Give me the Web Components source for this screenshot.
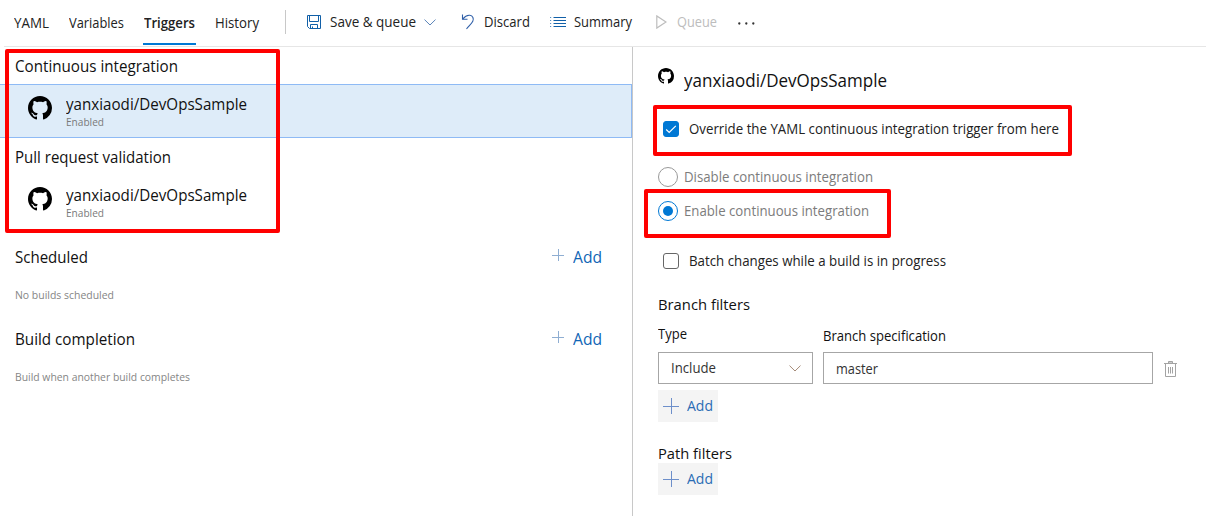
<!DOCTYPE html>
<html lang="en">
<head>
<meta charset="utf-8">
<title>Triggers</title>
<style>
html,body{margin:0;height:516px;overflow:hidden;background:#fff}
body{font-family:"Open Sans","Noto Sans",sans-serif;color:#111}
</style>
</head>
<body>
<triggers-page></triggers-page>
<script>
const define = (name, html, init) => customElements.define(name, class extends HTMLElement {
  constructor() {
    super();
    const t = document.createElement('template');
    t.innerHTML = html;
    this.attachShadow({mode: 'open'}).append(t.content.cloneNode(true));
  }
  connectedCallback() { if (init) init.call(this, this.shadowRoot); }
});

/* Single-line label condensed to the width it is given. */
define('ui-label', `<style>
:host{display:block;white-space:nowrap;flex:none;line-height:20px;font-size:13.8px}
span{display:inline-block;transform-origin:0 50%}
</style><span><slot></slot></span>`, function (root) {
  const w = +this.getAttribute('w'), s = root.querySelector('span');
  const size = this.getAttribute('size');
  if (size) this.style.fontSize = size + 'px';
  this.style.width = w + 'px';
  s.style.transform = 'none';
  s.style.transform = 'scaleX(' + w / s.getBoundingClientRect().width + ')';
});

const ICONS = {
  github: ['0 0 16 16', '<path fill="#000" d="M8 0C3.58 0 0 3.58 0 8c0 3.54 2.29 6.53 5.47 7.59.4.07.55-.17.55-.38 0-.19-.01-.82-.01-1.49-2.01.37-2.53-.49-2.69-.94-.09-.23-.48-.94-.82-1.13-.28-.15-.68-.52-.01-.53.63-.01 1.08.58 1.23.82.72 1.21 1.87.87 2.33.66.07-.52.28-.87.51-1.07-1.78-.2-3.64-.89-3.64-3.95 0-.87.31-1.59.82-2.15-.08-.2-.36-1.02.08-2.12 0 0 .67-.21 2.2.82.64-.18 1.32-.27 2-.27s1.36.09 2 .27c1.53-1.04 2.2-.82 2.2-.82.44 1.1.16 1.92.08 2.12.51.56.82 1.27.82 2.15 0 3.07-1.87 3.75-3.65 3.95.29.25.54.73.54 1.48 0 1.07-.01 1.93-.01 2.2 0 .21.15.46.55.38A8.01 8.01 0 0 0 16 8c0-4.42-3.58-8-8-8z"/>'],
  save: ['0 0 14 14', '<g fill="none" stroke="#1160a8"><path d="M.5.5h13v13h-11l-2-2z"/><path d="M2.5.5v6h9v-6M3.5 13.5v-4h7v4M5.5 11.5v2"/></g>'],
  undo: ['0 0 14 16', '<g fill="none" stroke="#2f5fa8" stroke-width="1.1"><path d="M1.5.5v4.8h5"/><path d="M1.7 5.1C4 2.2 6.5 1 8.800 1.300c3 .4 4.300 3.500 3 6C10.800 9.300 8.500 11.500 5.500 15"/></g>'],
  list: ['0 0 16 11', '<g stroke="#1160a8"><path d="M3.500.5H16M3.500 3.500H16M3.500 6.500H16M3.500 9.500H16" /><path stroke-opacity=".7" d="M0 .5h1.200M0 3.500h1.200M0 6.500h1.200M0 9.500h1.200"/></g>'],
  play: ['0 0 11 14', '<path fill="none" stroke="#bdbdbd" stroke-width="1.200" d="M.8.900v12.200L10 7z"/>'],
  chevron: ['0 0 12 7', '<path fill="none" stroke="currentColor" d="M.5.600 6 6 11.500.600"/>'],
  plus: ['0 0 16 16', '<path fill="none" stroke="currentColor" d="M8.500 0v16M0 8.500h16"/>'],
  plusSmall: ['0 0 13 13', '<path fill="none" stroke="currentColor" d="M6.500 0v12M0 6.500h12"/>'],
  dots: ['0 0 17 3', '<g fill="#333"><circle cx="1.300" cy="1.500" r="1.150"/><circle cx="8.300" cy="1.500" r="1.150"/><circle cx="15.300" cy="1.500" r="1.150"/></g>'],
  check: ['0 0 16 16', '<path fill="none" stroke="#fff" stroke-width="1.200" d="m3.200 8.500 3 3 6.600-6.700"/>'],
  trash: ['0 0 13 16', '<g fill="none" stroke="#a3a3a3"><path d="M4.500 2V.5h4V2" fill="#ccc"/><path d="M0 2.500h13"/><path d="M1.500 3v12.500h10V3M4.500 6v6.500M6.500 6v6.500M8.500 6v6.500"/></g>']
};
customElements.define('ui-icon', class extends HTMLElement {
  constructor() {
    super();
    this.attachShadow({mode: 'open'});
  }
  connectedCallback() {
    const [box, body] = ICONS[this.getAttribute('name')];
    const [,, w, h] = box.split(' ');
    const W = this.getAttribute('w') || w, H = this.getAttribute('h') || (h * W / w);
    this.shadowRoot.innerHTML = `<style>:host{display:block;flex:none}svg{display:block}</style>
<svg width="${W}" height="${H}" viewBox="${box}">${body}</svg>`;
  }
});

define('top-bar', `<style>
:host{display:block;height:47px;box-sizing:border-box}
.bar{display:flex;align-items:center;height:46px;padding-left:14px}
.line{height:1px;margin-left:4px;background:#e6e6e6}
.tab{display:flex;align-items:center;height:44px;margin-right:20px;box-sizing:border-box}
.on{font-weight:600;border-bottom:2px solid #0078d4;padding-top:2px;margin:0 19px 0 -1px;padding-inline:1px}
.sep{width:1px;height:24px;margin:-2px 21px 0 26px;background:#c8c8c8}
ui-label{color:#222}.off{color:#bdbdbd}
</style>
<div class="bar">
<div class="tab"><ui-label w="35">YAML</ui-label></div>
<div class="tab"><ui-label w="55">Variables</ui-label></div>
<div class="tab on"><ui-label w="51">Triggers</ui-label></div>
<ui-label w="44">History</ui-label>
<div class="sep"></div>
<ui-icon name="save" style="margin-top:-2px"></ui-icon>
<ui-label w="86" style="margin-left:9px;margin-top:-2px">Save &amp; queue</ui-label>
<ui-icon name="chevron" w="12" style="margin-left:8px;margin-top:-1px;color:#5b84b8"></ui-icon>
<ui-icon name="undo" style="margin-left:25px;margin-top:-2px"></ui-icon>
<ui-label w="46" style="margin-left:9px;margin-top:-2px">Discard</ui-label>
<ui-icon name="list" style="margin-left:20px;margin-top:-1px"></ui-icon>
<ui-label w="58" style="margin-left:8px;margin-top:-2px">Summary</ui-label>
<ui-icon name="play" style="margin-left:24px;margin-top:-2px"></ui-icon>
<ui-label class="off" w="40" style="margin-left:10px;margin-top:-2px">Queue</ui-label>
<ui-icon name="dots" style="margin-left:21px;margin-top:1px"></ui-icon>
</div><div class="line"></div>`);

define('repo-item', `<style>
:host{display:flex;height:54px;box-sizing:border-box;padding:9px 0 0 28px;border:1px solid transparent;border-left:0}
:host([selected]){background:#deecf9;border-color:#8ebaf5}
ui-icon{margin-top:2px;margin-right:14px}
.sub{color:#7a7a7a;line-height:14px;padding-top:1px}
</style>
<ui-icon name="github" w="24"></ui-icon>
<div><ui-label w="181" size="15.6">yanxiaodi/DevOpsSample</ui-label><ui-label class="sub" w="38" size="11.6">Enabled</ui-label></div>`);

define('add-link', `<style>
:host{display:flex;align-items:center;color:#1065b5}
ui-icon{color:#8faed2;margin-right:8px;margin-top:-2px}
</style><ui-icon name="plusSmall"></ui-icon><ui-label w="29" size="15.6">Add</ui-label>`);

define('add-button', `<style>
:host{display:flex;align-items:center;width:60px;height:32px;box-sizing:border-box;padding-left:5px;background:#f4f4f4;color:#2b6cb5}
ui-icon{color:#6d8fca;margin-right:8px}
</style><ui-icon name="plus" w="16"></ui-icon><ui-label w="26">Add</ui-label>`);

define('trigger-list', `<style>
:host{display:block;width:632px;flex:none}
.head{display:flex;align-items:center;justify-content:space-between;height:37px;padding:0 30px 0 15px;box-sizing:border-box}
.note{color:#858585;padding-left:15px}
</style>
<div class="head"><ui-label w="163" size="15.6">Continuous integration</ui-label></div>
<repo-item selected></repo-item>
<div class="head"><ui-label w="156" size="15.6">Pull request validation</ui-label></div>
<repo-item></repo-item>
<div class="head" style="margin-top:9px"><ui-label w="73" size="15.6">Scheduled</ui-label><add-link></add-link></div>
<ui-label class="note" w="99" size="11" style="margin-top:10px">No builds scheduled</ui-label>
<div class="head" style="margin-top:15px"><ui-label w="120" size="15.6">Build completion</ui-label><add-link></add-link></div>
<ui-label class="note" w="175" size="11" style="margin-top:10px">Build when another build completes</ui-label>`);

define('check-option', `<style>
:host{display:flex;align-items:center;height:20px;padding-left:5px;color:#222}
i{display:block;width:16px;height:16px;box-sizing:border-box;border:1px solid #666;border-radius:3px;margin-right:10px}
ui-icon{display:none}
:host([checked]) i{background:#0078d4;border-color:#0078d4}
:host([checked]) ui-icon{display:block;margin:-1px}
</style><i><ui-icon name="check"></ui-icon></i><slot></slot>`);

define('radio-option', `<style>
:host{display:flex;align-items:center;height:20px;color:#7c7c7c}
i{display:grid;place-items:center;width:20px;height:20px;box-sizing:border-box;border:1px solid #999;border-radius:50%;margin-right:6px}
:host([checked]) i{border-color:#0078d4}
:host([checked]) i::after{content:"";width:10px;height:10px;border-radius:50%;background:#0078d4}
</style><i></i><slot></slot>`);

define('trigger-details', `<style>
:host{display:block;flex:1;border-left:1px solid #c8c8c8;padding:20px 0 0 25px;box-sizing:border-box}
.title{display:flex;height:26px}
.cols{display:flex}
.box{display:flex;align-items:center;justify-content:space-between;box-sizing:border-box;height:32px;border:1px solid #a6a6a6;padding:0 11px 0 12px;color:#333}
</style>
<div class="title"><ui-icon name="github" w="16" style="margin:1px 10px 0 0"></ui-icon><ui-label w="203" size="17.5" style="line-height:26px">yanxiaodi/DevOpsSample</ui-label></div>
<check-option checked style="margin-top:26px"><ui-label w="370">Override the YAML continuous integration trigger from here</ui-label></check-option>
<radio-option style="margin-top:28px"><ui-label w="189">Disable continuous integration</ui-label></radio-option>
<radio-option checked style="margin-top:14px"><ui-label w="185">Enable continuous integration</ui-label></radio-option>
<check-option style="margin-top:30px"><ui-label w="257">Batch changes while a build is in progress</ui-label></check-option>
<ui-label w="92" size="15" style="margin-top:23px">Branch filters</ui-label>
<div class="cols" style="margin-top:10px">
<div style="width:155px;margin-right:10px"><ui-label w="29">Type</ui-label>
<div class="box" style="margin-top:8px"><ui-label w="45">Include</ui-label><ui-icon name="chevron" w="12" style="color:#a58b78"></ui-icon></div></div>
<div style="width:330px"><ui-label w="123" style="padding-top:2px">Branch specification</ui-label>
<div class="box" style="margin-top:6px"><ui-label w="42" style="padding-top:2px">master</ui-label></div></div>
<ui-icon name="trash" style="margin:37px 0 0 11px"></ui-icon>
</div>
<add-button style="margin-top:6px"></add-button>
<ui-label w="74" size="15" style="margin-top:21px">Path filters</ui-label>
<add-button></add-button>`);

/* Rectangular annotation laid over the page. */
define('mark-box', `<style>
:host{display:block;position:absolute;box-sizing:border-box;border:4px solid #f00;border-radius:2px;pointer-events:none}
</style>`);

define('triggers-page', `<style>
:host{display:block;position:relative;width:1206px;height:516px;background:#fff}
.main{display:flex;height:469px}
</style>
<top-bar></top-bar>
<div class="main"><trigger-list></trigger-list><trigger-details></trigger-details></div>
<mark-box style="left:5px;top:49px;width:275px;height:184px"></mark-box>
<mark-box style="left:653px;top:105px;width:419px;height:51px"></mark-box>
<mark-box style="left:644px;top:189px;width:247px;height:49px"></mark-box>`);
</script>
</body>
</html>
